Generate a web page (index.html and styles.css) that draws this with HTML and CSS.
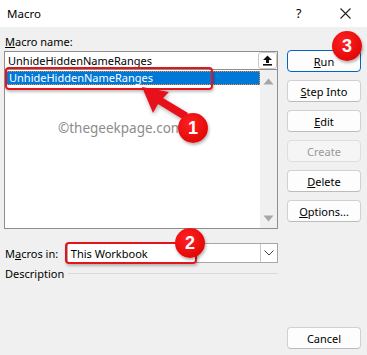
FILE: index.html
```html
<!DOCTYPE html>
<html lang="en">
<head>
  <meta charset="UTF-8" />
  <title>Macro</title>
  <link rel="stylesheet" href="styles.css">
</head>
<body>

  <div class="dialog">
    <div class="titlebar">
      <span class="title">Macro</span>
      <span class="help">?</span>
      <span class="close">
        <svg width="11" height="11" viewBox="0 0 11 11"><path d="M0.5 0.5 L10.5 10.5 M10.5 0.5 L0.5 10.5" stroke="#222" stroke-width="1.1" fill="none"/></svg>
      </span>
    </div>

    <div class="content">
      <div class="left">
        <div class="label"><u>M</u>acro name:</div>
        <div class="name-edit">
          <span class="edit-text">UnhideHiddenNameRanges</span>
          <span class="up-btn">
            <svg width="11" height="11" viewBox="0 0 11 11"><path d="M5.5 0.5 L10 5 L7 5 L7 8 L4 8 L4 5 L1 5 Z" fill="#111"/><rect x="1" y="9" width="9" height="1.6" fill="#111"/></svg>
          </span>
        </div>
        <div class="name-list">
          <div class="items">
            <div class="item selected">UnhideHiddenNameRanges</div>
          </div>
          <div class="scrollbar">
            <svg width="11" height="7" viewBox="0 0 11 7"><path d="M5.5 0.5 L10.5 6.5 L0.5 6.5 Z" fill="#a6a6a6"/></svg>
            <svg width="11" height="7" viewBox="0 0 11 7"><path d="M0.5 0.5 L10.5 0.5 L5.5 6.5 Z" fill="#a6a6a6"/></svg>
          </div>
        </div>
        <div class="macros-in">
          <span class="row-label">M<u>a</u>cros in:</span>
          <div class="select">
            <span class="select-text">This Workbook</span>
            <span class="drop">
              <svg width="10" height="6" viewBox="0 0 10 6"><path d="M0.5 0.5 L5 5 L9.5 0.5" stroke="#444" stroke-width="1" fill="none"/></svg>
            </span>
          </div>
        </div>
        <div class="desc">
          <span>Description</span>
          <span class="rule"></span>
        </div>
      </div>

      <div class="buttons">
        <button class="btn default"><u>R</u>un</button>
        <button class="btn"><u>S</u>tep Into</button>
        <button class="btn"><u>E</u>dit</button>
        <button class="btn disabled">Create</button>
        <button class="btn"><u>D</u>elete</button>
        <button class="btn"><u>O</u>ptions...</button>
        <button class="btn cancel">Cancel</button>
      </div>
    </div>

    <!-- annotations drawn over the dialog -->
    <div class="watermark">©thegeekpage.com</div>
    <div class="mark-box box-1"></div>
    <div class="mark-box box-2"></div>
    <svg class="arrow" width="367" height="355" viewBox="0 0 367 355">
      <path d="M142 87 L169 92 L163 98 L188 113 L184 120 L158 104 L153 113 Z" fill="#e8101a"/>
    </svg>
    <div class="badge badge-1">1</div>
    <div class="badge badge-2">2</div>
    <div class="badge badge-3">3</div>
  </div>

</body>
</html>
```

FILE: styles.css
```css
body {
  margin: 0;
  font-family: "Noto Sans", "Open Sans", sans-serif;
  font-size: 11px;
  color: #000;
}

.dialog {
  position: relative;
  width: 367px;
  height: 355px;
  background-color: #f0f0f0;
  overflow: hidden;
}

.titlebar {
  height: 27px;
  background-color: #fff;
  display: flex;
  align-items: center;
  padding-left: 7px;
}

.title {
  flex: 1;
  font-size: 11.5px;
}

.help {
  width: 12px;
  margin-right: 32px;
  font-size: 12.5px;
}

.close {
  display: flex;
  margin-right: 16px;
}

.content {
  display: flex;
  gap: 9px;
  height: 328px;
  box-sizing: border-box;
  padding: 7px 6px 6px 4px;
}

.left {
  width: 274px;
  display: flex;
  flex-direction: column;
}

.label {
  height: 16px;
  line-height: 16px;
  padding-left: 1px;
  margin-bottom: 1px;
}

.name-edit {
  height: 19px;
  box-sizing: border-box;
  border: 1px solid #8e8e8e;
  background-color: #fff;
  display: flex;
  align-items: center;
}

.edit-text {
  flex: 1;
  padding-left: 3px;
}

.up-btn {
  width: 19px;
  height: 17px;
  box-sizing: border-box;
  border: 1px solid #c8c8c8;
  border-radius: 3px;
  display: flex;
  align-items: center;
  justify-content: center;
}

.name-list {
  height: 159px;
  box-sizing: border-box;
  border: 1px solid #8e8e8e;
  border-top: none;
  background-color: #fff;
  display: flex;
}

.items {
  flex: 1;
  padding: 1px 0 0 1px;
}

.item {
  height: 14px;
  line-height: 13px;
  padding-left: 2px;
  box-sizing: border-box;
}

.item.selected {
  background-color: #0078d7;
  color: #fff;
  border: 1px dotted #ff8a28;
  line-height: 12px;
}

.scrollbar {
  width: 17px;
  background-color: #f0f0f0;
  display: flex;
  flex-direction: column;
  justify-content: space-between;
  align-items: center;
  padding: 8px 0 6px;
}

.macros-in {
  display: flex;
  align-items: center;
  margin-top: 14px;
}

.row-label {
  width: 62px;
  padding-left: 1px;
}

.select {
  width: 212px;
  height: 20px;
  box-sizing: border-box;
  border: 1px solid #a8a8a8;
  background-color: #fff;
  display: flex;
  align-items: center;
}

.select-text {
  flex: 1;
  padding-left: 3px;
}

.drop {
  width: 16px;
  height: 18px;
  border-left: 1px solid #c8c8c8;
  display: flex;
  align-items: center;
  justify-content: center;
}

.desc {
  display: flex;
  align-items: center;
  margin-top: 2px;
  height: 16px;
  padding-left: 1px;
}

.rule {
  flex: 1;
  height: 1px;
  margin-left: 4px;
  background-color: #d9d9d9;
}

.buttons {
  width: 74px;
  display: flex;
  flex-direction: column;
  gap: 8px;
  padding-top: 16px;
}

.btn {
  height: 22px;
  padding: 0;
  font-family: inherit;
  font-size: 11px;
  color: #000;
  background-color: #fdfdfd;
  border: 1px solid #d0d0d0;
  border-bottom-color: #bcbcbc;
  border-radius: 4px;
}

.btn.default {
  border: 1px solid #0067c0;
}

.btn.disabled {
  color: #9a9a9a;
  background-color: #f5f5f5;
  border-color: #dedede;
}

.btn.cancel {
  margin-top: auto;
}

/* annotations */
.watermark {
  position: absolute;
  left: 58px;
  top: 119px;
  font-size: 13.5px;
  color: #8c8c8c;
}

.mark-box {
  position: absolute;
  box-sizing: border-box;
  border: 2px solid #e3141c;
  border-radius: 4px;
  box-shadow: 1px 2px 3px rgba(0,0,0,0.25);
}

.box-1 {
  left: 5px;
  top: 67px;
  width: 208px;
  height: 23px;
}

.box-2 {
  left: 65px;
  top: 242px;
  width: 132px;
  height: 22px;
}

.arrow {
  position: absolute;
  left: 0;
  top: 0;
  filter: drop-shadow(1px 2px 2px rgba(0,0,0,0.3));
}

.badge {
  position: absolute;
  width: 30px;
  height: 30px;
  border-radius: 50%;
  background: radial-gradient(circle at 40% 35%, #ff2020, #d80000);
  color: #fff;
  font-family: "Liberation Sans", Arial, sans-serif;
  font-weight: bold;
  font-size: 18px;
  line-height: 30px;
  text-align: center;
  box-shadow: 1px 2px 3px rgba(0,0,0,0.3);
}

.badge-1 { left: 178px; top: 113px; }
.badge-2 { left: 175px; top: 228px; }
.badge-3 { left: 332px; top: 31px; }
```
